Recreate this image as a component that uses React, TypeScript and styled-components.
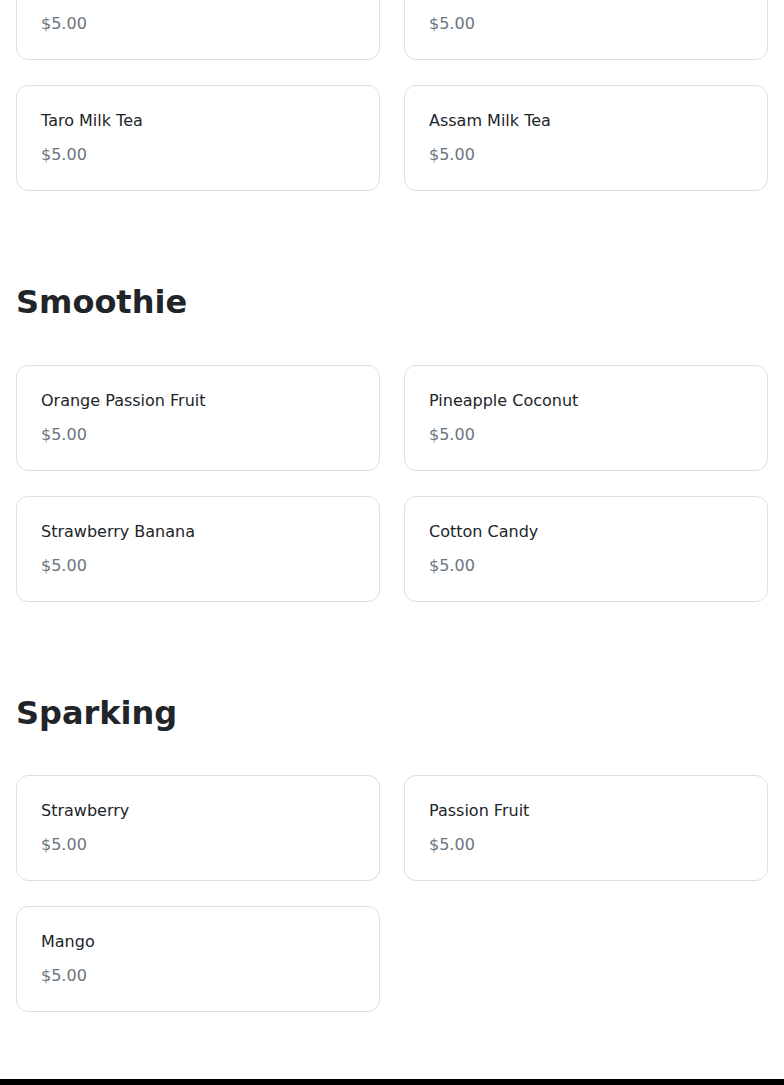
import React from "react";
import styled, { createGlobalStyle } from "styled-components";

type Item = { name: string; price: number };
type Category = { title: string; items: Item[] };

const menu: Category[] = [
  {
    title: "Milk Tea",
    items: [
      { name: "Classic Milk Tea", price: 5 },
      { name: "Thai Milk Tea", price: 5 },
      { name: "Taro Milk Tea", price: 5 },
      { name: "Assam Milk Tea", price: 5 },
    ],
  },
  {
    title: "Smoothie",
    items: [
      { name: "Orange Passion Fruit", price: 5 },
      { name: "Pineapple Coconut", price: 5 },
      { name: "Strawberry Banana", price: 5 },
      { name: "Cotton Candy", price: 5 },
    ],
  },
  {
    title: "Sparking",
    items: [
      { name: "Strawberry", price: 5 },
      { name: "Passion Fruit", price: 5 },
      { name: "Mango", price: 5 },
    ],
  },
];

const GlobalStyle = createGlobalStyle`
  * {
    box-sizing: border-box;
  }
  body {
    margin: 0;
    background: #fff;
    color: #212529;
    font-family: "DejaVu Sans", "Noto Sans", sans-serif;
    font-size: 16px;
    line-height: 1.5;
    overflow-x: hidden;
  }
`;

// the page is shown scrolled part-way into the first category
const StyledMain = styled.main`
  margin-top: -152px;
  padding: 0 16px;
`;

const StyledSection = styled.section`
  padding-bottom: 67px;
`;

const StyledHeading = styled.h2`
  margin: 25px 0 43px;
  font-size: 32px;
  font-weight: 700;
  line-height: 1.2;
  color: #212529;
`;

const StyledGrid = styled.div`
  display: grid;
  grid-template-columns: repeat(2, 1fr);
  gap: 25px 24px;
`;

const StyledCard = styled.div`
  border: 1px solid #dfdfdf;
  border-radius: 12px;
  background: #fff;
  padding: 23px 24px;
`;

const StyledName = styled.h5`
  margin: 0 0 10px;
  font-size: 16px;
  font-weight: 400;
  line-height: 24px;
  color: #212529;
`;

const StyledPrice = styled.p`
  margin: 0;
  font-size: 16px;
  line-height: 24px;
  color: #6c757d;
`;

const StyledFooter = styled.footer`
  background: #000;
  color: #fff;
  padding: 24px 16px;
  font-size: 14px;
`;

const App = () => {
  return (
    <>
      <GlobalStyle />
      <StyledMain>
        {menu.map((cat) => (
          <StyledSection key={cat.title}>
            <StyledHeading>{cat.title}</StyledHeading>
            <StyledGrid>
              {cat.items.map((item) => (
                <StyledCard key={item.name}>
                  <StyledName>{item.name}</StyledName>
                  <StyledPrice>${item.price.toFixed(2)}</StyledPrice>
                </StyledCard>
              ))}
            </StyledGrid>
          </StyledSection>
        ))}
      </StyledMain>
      <StyledFooter>© Bubble Tea Shop</StyledFooter>
    </>
  );
};

export default App;
